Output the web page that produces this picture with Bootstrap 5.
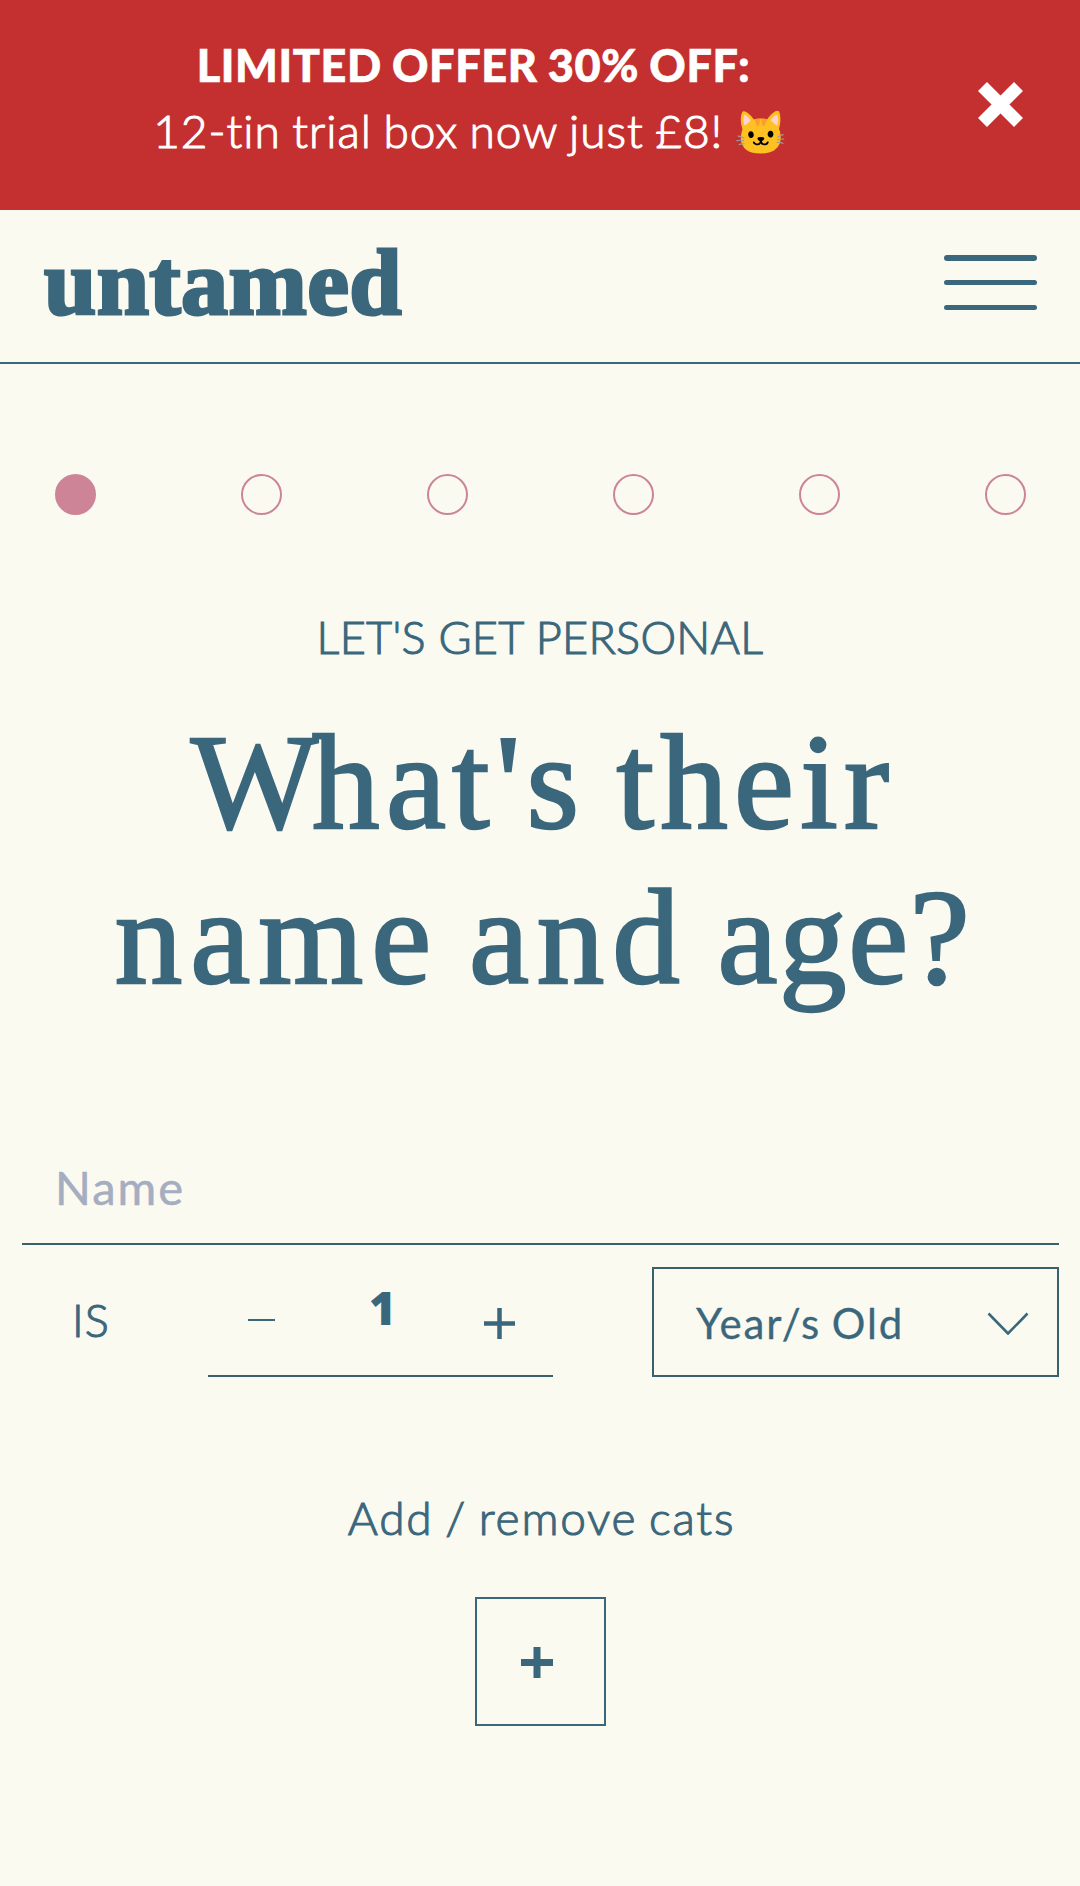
<!DOCTYPE html>
<html lang="en">
<head>
<meta charset="utf-8">
<meta name="viewport" content="width=device-width, initial-scale=1">
<title>untamed</title>
<link href="https://cdn.jsdelivr.net/npm/bootstrap@5.3.0/dist/css/bootstrap.min.css" rel="stylesheet">
<style>
:root{--teal:#3b677d;--line:#38606d;--cream:#fbfaf1;--pink:#cd8496;--promo:#c43030}
body{background:var(--cream);color:var(--teal);font-family:Lato,"Liberation Sans",sans-serif;font-size:45px;line-height:66px;font-weight:300;height:1886px;overflow:hidden}
button{color:inherit;background:none;border:0;padding:0;font-weight:inherit}
svg{display:block}
.light-copy{-webkit-text-stroke:1.1px currentColor}
.promo{height:210px;background:var(--promo);padding:32px 57px 0 0}
.promo-copy{width:941px;white-space:nowrap}
.promo-head{font-weight:900;letter-spacing:.6px;word-spacing:-1px;padding-left:6px;-webkit-text-stroke:.6px currentColor}
.promo-text{font-size:46px;letter-spacing:1px;word-spacing:-2px}
.promo-text .cat{-webkit-text-stroke:0;letter-spacing:0;font-size:43px;margin-left:-1px}
.promo-close{margin-top:50px}
.site-nav{height:154px;border-bottom:2px solid var(--teal);padding:22px 43px 0 44px}
.brand{font:700 94px/100px "Liberation Serif",serif;letter-spacing:.4px;-webkit-text-stroke:3px var(--teal)}
.menu-btn{margin-top:23px}
.steps{padding:110px 54px 0 55px}
.dot{width:41px;height:41px;border:2px solid var(--pink);border-radius:50%}
.dot.on{background:var(--pink)}
.eyebrow{margin-top:89px;letter-spacing:.3px}
.question{font:400 135px/155px "Liberation Serif",serif;-webkit-text-stroke:2.4px var(--teal);margin:35px 0 0;padding-left:6px;white-space:nowrap}
.question .first{letter-spacing:6.3px;word-spacing:-9px}
.question .cap-w{letter-spacing:-6px}
.question .second{letter-spacing:8px;word-spacing:-12px}
.question .last-word{letter-spacing:1.6px}
.cat-form{padding:114px 21px 0 22px}
.name-field{height:116px;border:0;border-bottom:2px solid var(--line);border-radius:0;background:none!important;box-shadow:none!important;font-size:47px;letter-spacing:2px;padding:2px 0 0 33px;color:var(--teal);font-weight:400}
.name-field::placeholder{color:#a5adc0;opacity:1;-webkit-text-stroke:.5px #a5adc0}
.age-line{margin-top:22px;height:110px}
.is-label{width:186px;padding:20px 0 0 50px;letter-spacing:1px}
.stepper{width:345px;height:110px;border-bottom:2px solid var(--line);padding:0 38px 0 40px}
.stepper .minus{margin-top:52px}
.stepper .plus{margin-top:41px}
.age-value{font:800 46px/66px "Open Sans","Noto Sans",sans-serif;margin:7px 0 0 6px}
.unit-select{width:407px;height:110px;border:2px solid var(--line);padding:2px 28px 0 42px;font-size:42px;font-weight:400;letter-spacing:1.9px;word-spacing:-2px;-webkit-text-stroke:.3px currentColor}
.add-label{margin-top:108px;font-size:46px;letter-spacing:1.8px;word-spacing:-2.5px;padding-left:2px}
.add-btn{width:131px;height:129px;border:2px solid var(--teal);margin:46px auto 0;padding:2px 8px 0 0}
</style>
</head>
<body>
<div class="promo d-flex justify-content-between align-items-start">
  <div class="promo-copy text-center text-white">
    <div class="promo-head">LIMITED OFFER 30% OFF:</div>
    <div class="promo-text light-copy">12-tin trial box now just £8! <span class="cat">🐱</span></div>
  </div>
  <button class="promo-close" type="button" aria-label="Close"><svg width="45" height="45" viewBox="0 0 45 45"><path d="M4.500 4.500l36 36M40.500 4.500l-36 36" stroke="#fff" stroke-width="12.700"/></svg></button>
</div>
<header class="site-nav d-flex justify-content-between align-items-start">
  <a class="brand text-decoration-none text-reset" href="#">untamed</a>
  <button class="menu-btn" type="button" aria-label="Menu"><svg width="93" height="55" viewBox="0 0 93 55" fill="#3b677d"><rect width="93" height="6" rx="3"/><rect y="25" width="93" height="5" rx="2.500"/><rect y="50" width="93" height="5" rx="2.500"/></svg></button>
</header>
<main>
  <div class="steps d-flex justify-content-between"><i class="dot on"></i><i class="dot"></i><i class="dot"></i><i class="dot"></i><i class="dot"></i><i class="dot"></i></div>
  <div class="eyebrow light-copy text-center">LET'S GET PERSONAL</div>
  <h1 class="question text-center"><span class="first"><span class="cap-w">W</span>hat's their</span><br><span class="second">name and <span class="last-word">age?</span></span></h1>
  <form class="cat-form">
    <input class="form-control name-field" type="text" placeholder="Name" aria-label="Name">
    <div class="age-line d-flex align-items-start">
      <span class="is-label light-copy">IS</span>
      <div class="stepper d-flex justify-content-between align-items-start">
        <button class="minus" type="button" aria-label="Less"><svg width="27" height="2"><rect width="27" height="2" fill="#3b677d"/></svg></button>
        <span class="age-value">1</span>
        <button class="plus" type="button" aria-label="More"><svg width="31" height="31" viewBox="0 0 31 31"><path d="M15.500 0v31M0 15.500h31" stroke="#3b677d" stroke-width="4.500"/></svg></button>
      </div>
      <button class="unit-select ms-auto d-flex align-items-center justify-content-between" type="button"><span>Year/s Old</span><svg width="42" height="24" viewBox="0 0 42 24"><path d="M1.500 2.500L21 22.500L40.500 2.500" fill="none" stroke="#3b677d" stroke-width="2.600"/></svg></button>
    </div>
    <div class="add-label light-copy text-center">Add / remove cats</div>
    <button class="add-btn d-flex align-items-center justify-content-center" type="button" aria-label="Add a cat"><svg width="32" height="31" viewBox="0 0 32 31"><path d="M16 0v31M0 15.500h32" stroke="#3b677d" stroke-width="7"/></svg></button>
  </form>
</main>
<script src="https://cdn.jsdelivr.net/npm/bootstrap@5.3.0/dist/js/bootstrap.bundle.min.js"></script>
</body>
</html>
